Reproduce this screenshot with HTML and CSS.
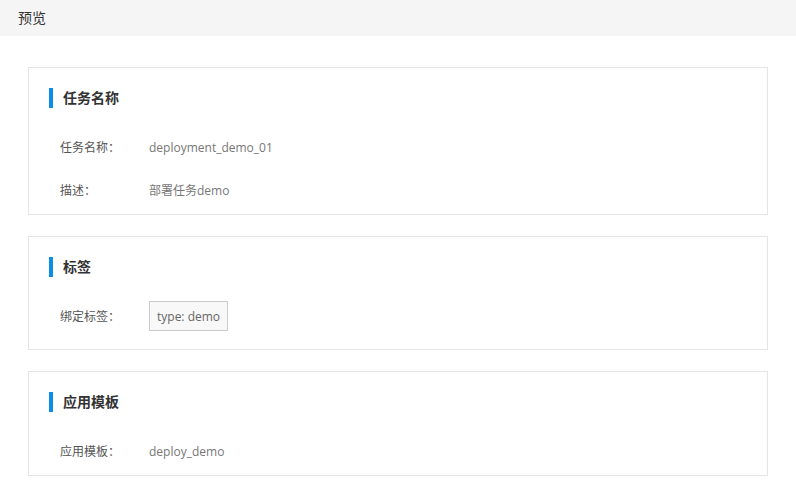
FILE: index.html
```html
<!DOCTYPE html>
<html lang="zh-CN">
<head>
<meta charset="utf-8">
<title>预览</title>
<link rel="stylesheet" href="styles.css">
</head>
<body>
<header class="page-header">预览</header>
<main class="content">
  <section class="card">
    <h2 class="card-title">任务名称</h2>
    <div class="row">
      <span class="label">任务名称：</span>
      <span class="value">deployment_demo_01</span>
    </div>
    <div class="row">
      <span class="label">描述：</span>
      <span class="value">部署任务demo</span>
    </div>
  </section>
  <section class="card">
    <h2 class="card-title">标签</h2>
    <div class="row row-tags">
      <span class="label">绑定标签：</span>
      <span class="tag">type: demo</span>
    </div>
  </section>
  <section class="card">
    <h2 class="card-title">应用模板</h2>
    <div class="row">
      <span class="label">应用模板：</span>
      <span class="value">deploy_demo</span>
    </div>
  </section>
</main>
</body>
</html>
```
FILE: styles.css
```css
* { box-sizing: border-box; }
html, body { margin: 0; padding: 0; background: #fff; }
body {
  font-family: "Open Sans", "Noto Sans CJK SC", "Noto Sans", sans-serif;
  color: #333;
}
.page-header {
  height: 36px;
  line-height: 36px;
  padding-left: 18px;
  background: #f5f5f5;
  font-size: 14px;
  color: #333;
}
.content {
  padding: 31px 28px 0;
  display: flex;
  flex-direction: column;
  gap: 21px;
}
.card {
  border: 1px solid #e5e5e5;
  padding: 20px 20px 9px;
}
.card-title {
  margin: 0 0 24px;
  height: 20px;
  line-height: 20px;
  border-left: 4px solid #0a8ee6;
  padding-left: 10px;
  font-size: 14px;
  font-weight: bold;
  color: #333;
}
.row {
  display: flex;
  align-items: center;
  min-height: 30px;
  padding-left: 11px;
  font-size: 12px;
}
.row + .row { margin-top: 13px; }
.label {
  width: 89px;
  flex: none;
  color: #555;
}
.value { color: #777; }
.row-tags { padding-bottom: 9px; }
.tag {
  display: inline-flex;
  align-items: center;
  height: 30px;
  padding: 0 7px;
  border: 1px solid #ccc;
  background: #f8f8f8;
  color: #666;
}
```
